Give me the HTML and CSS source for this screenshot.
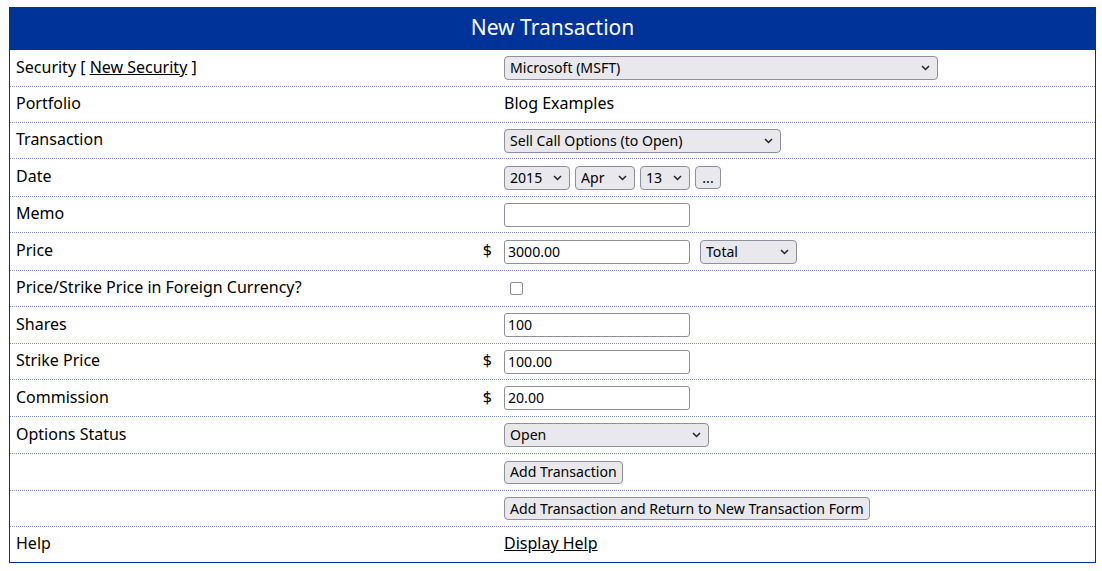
FILE: index.html
```html
<!DOCTYPE html>
<html lang="en">
<head>
  <meta charset="UTF-8">
  <title>New Transaction</title>
  <link rel="stylesheet" href="styles.css">
</head>
<body>
  <form class="txn">
    <div class="txn-head">New Transaction</div>

    <div class="row first">
      <div class="label">Security [ <a href="#">New Security</a> ]</div>
      <div class="cur"></div>
      <div class="field">
        <select class="sel w-security"><option>Microsoft (MSFT)</option></select>
      </div>
    </div>

    <div class="row">
      <div class="label">Portfolio</div>
      <div class="cur"></div>
      <div class="field"><span class="plain">Blog Examples</span></div>
    </div>

    <div class="row">
      <div class="label">Transaction</div>
      <div class="cur"></div>
      <div class="field">
        <select class="sel w-type"><option>Sell Call Options (to Open)</option></select>
      </div>
    </div>

    <div class="row h38">
      <div class="label">Date</div>
      <div class="cur"></div>
      <div class="field date">
        <select class="sel w-year"><option>2015</option></select>
        <select class="sel w-month"><option>Apr</option></select>
        <select class="sel w-day"><option>13</option></select>
        <button type="button" class="btn dots">...</button>
      </div>
    </div>

    <div class="row">
      <div class="label">Memo</div>
      <div class="cur"></div>
      <div class="field"><input type="text" class="txt"></div>
    </div>

    <div class="row h38">
      <div class="label">Price</div>
      <div class="cur">$</div>
      <div class="field">
        <input type="text" class="txt" value="3000.00">
        <select class="sel w-total"><option>Total</option></select>
      </div>
    </div>

    <div class="row">
      <div class="label">Price/Strike Price in Foreign Currency?</div>
      <div class="cur"></div>
      <div class="field"><input type="checkbox" class="chk"></div>
    </div>

    <div class="row h37">
      <div class="label">Shares</div>
      <div class="cur"></div>
      <div class="field"><input type="text" class="txt" value="100"></div>
    </div>

    <div class="row">
      <div class="label">Strike Price</div>
      <div class="cur">$</div>
      <div class="field"><input type="text" class="txt" value="100.00"></div>
    </div>

    <div class="row h37">
      <div class="label">Commission</div>
      <div class="cur">$</div>
      <div class="field"><input type="text" class="txt" value="20.00"></div>
    </div>

    <div class="row h37">
      <div class="label">Options Status</div>
      <div class="cur"></div>
      <div class="field">
        <select class="sel w-status"><option>Open</option></select>
      </div>
    </div>

    <div class="row h37">
      <div class="label"></div>
      <div class="cur"></div>
      <div class="field"><button type="button" class="btn">Add Transaction</button></div>
    </div>

    <div class="row">
      <div class="label"></div>
      <div class="cur"></div>
      <div class="field"><button type="button" class="btn">Add Transaction and Return to New Transaction Form</button></div>
    </div>

    <div class="row">
      <div class="label">Help</div>
      <div class="cur"></div>
      <div class="field"><a href="#" class="plain">Display Help</a></div>
    </div>
  </form>
</body>
</html>
```

FILE: styles.css
```css
body {
  margin: 0;
  padding: 7px 0 0 9px;
  font-family: "Noto Sans", "DejaVu Sans", sans-serif;
  font-size: 16px;
  color: #000;
  background: #fff;
}

a {
  color: #000;
  text-decoration: underline;
}

.txn {
  width: 1087px;
  box-sizing: border-box;
  border: 1px solid #003399;
  border-top: none;
}

.txn-head {
  height: 43px;
  margin: 0 -1px;
  background: #003399;
  color: #fff;
  font-size: 21px;
  line-height: 41px;
  text-align: center;
}

.row {
  display: flex;
  align-items: center;
  height: 36px;
  box-sizing: border-box;
  border-top: 1px dotted #8396c6;
}

.row.first {
  border-top: none;
}

.row.h37 {
  height: 37px;
}

.row.h38 {
  height: 38px;
}

.label {
  flex: 0 0 458px;
  padding-left: 6px;
  padding-bottom: 3px;
}

.cur {
  flex: 0 0 26px;
  text-align: right;
  padding-right: 8px;
  padding-bottom: 3px;
  box-sizing: border-box;
}

.field {
  flex: 1;
  padding-left: 4px;
  display: flex;
  align-items: center;
}

.plain {
  padding-bottom: 3px;
}

.date {
  gap: 5px;
}

.sel,
.txt,
.btn {
  font-family: "Noto Sans", "DejaVu Sans", sans-serif;
  font-size: 14.1px;
  color: #000;
  height: 24px;
  box-sizing: border-box;
  border: 1px solid #8f8f9d;
  margin: 0;
  padding-bottom: 1px;
}

.sel {
  appearance: none;
  -webkit-appearance: none;
  background: #e9e9ed url("data:image/svg+xml,%3Csvg xmlns='http://www.w3.org/2000/svg' width='9' height='6'%3E%3Cpath d='M1 1l3.5 3.5L8 1' fill='none' stroke='%23222' stroke-width='1.5'/%3E%3C/svg%3E") no-repeat right 7px center;
  border-radius: 4px;
  padding: 0 20px 1px 5px;
}

.w-security { width: 434px; }
.w-type { width: 277px; }
.w-year { width: 66px; }
.w-month { width: 60px; }
.w-day { width: 50px; }
.w-total { width: 97px; margin-left: 10px; }
.w-status { width: 205px; }

.txt {
  width: 186px;
  background: #fff;
  border-radius: 3px;
  padding: 0 3px 1px;
}

.btn {
  background: #e9e9ed;
  border-radius: 4px;
  padding: 0 5px 1px;
  height: 23px;
}

.dots {
  width: 26px;
  padding: 0 0 1px;
}

.chk {
  appearance: none;
  -webkit-appearance: none;
  width: 13px;
  height: 13px;
  margin: 0 0 0 6px;
  border: 1px solid #8f8f9d;
  border-radius: 2px;
  background: #fff;
}
```
